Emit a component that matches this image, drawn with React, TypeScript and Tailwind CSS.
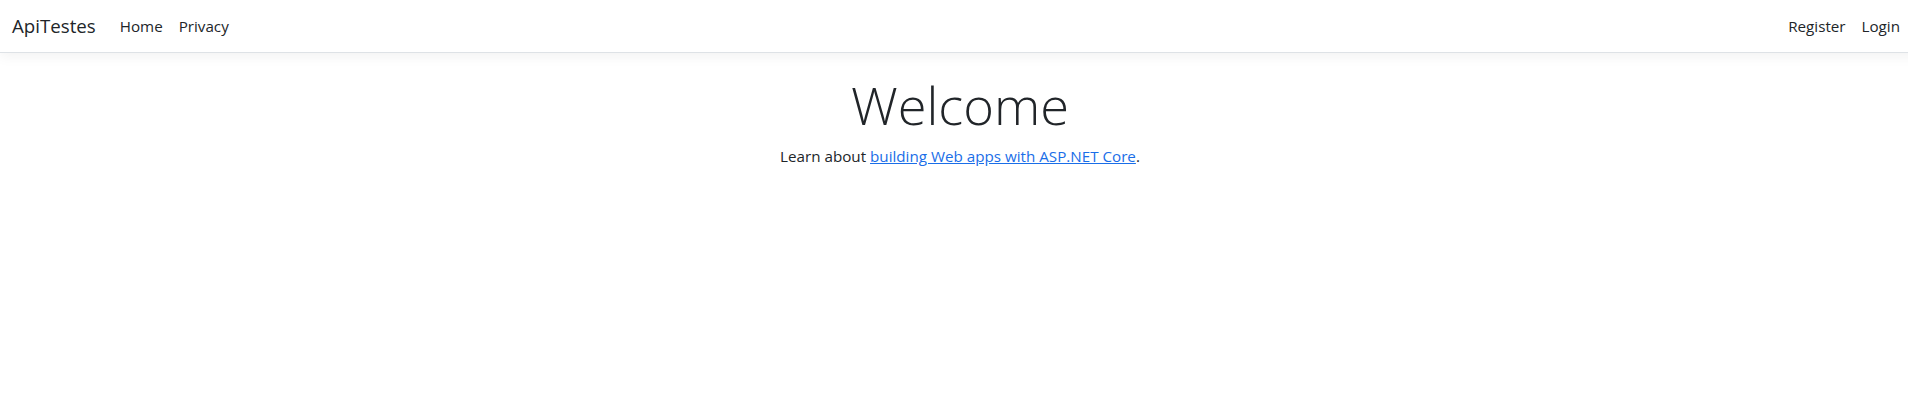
import React from "react";

export default function App() {
  return (
    <div className="w-full overflow-hidden bg-white">
      <div className="w-[1920px] min-h-[415px] bg-white text-[#212529] font-['Open_Sans',sans-serif] text-[15.2px] leading-[24px]">
        <header>
          <nav className="bg-white border-b border-[#dee2e6] shadow-[0_4px_12px_rgba(0,0,0,0.05)] mb-4 py-[6px]">
            <div className="flex items-center px-3">
              <a className="text-[18.7px] leading-[30px] py-[5px] mr-4 text-[#212529] whitespace-nowrap" href="#">
                ApiTestes
              </a>
              <ul className="flex flex-1">
                <li>
                  <a className="block px-2 py-2 text-[#212529]" href="#">Home</a>
                </li>
                <li>
                  <a className="block px-2 py-2 text-[#212529]" href="#">Privacy</a>
                </li>
              </ul>
              <ul className="flex">
                <li>
                  <a className="block px-2 py-2 text-[#212529]" href="#">Register</a>
                </li>
                <li>
                  <a className="block px-2 py-2 text-[#212529]" href="#">Login</a>
                </li>
              </ul>
            </div>
          </nav>
        </header>
        <main className="pb-3 text-center">
          <h1 className="text-[52.4px] font-light leading-[67px] pt-[2px] mb-[6px]">Welcome</h1>
          <p>
            Learn about{" "}
            <a className="text-[#1a6ee8] underline" href="#">
              building Web apps with ASP.NET Core
            </a>
            .
          </p>
        </main>
      </div>
    </div>
  );
}
